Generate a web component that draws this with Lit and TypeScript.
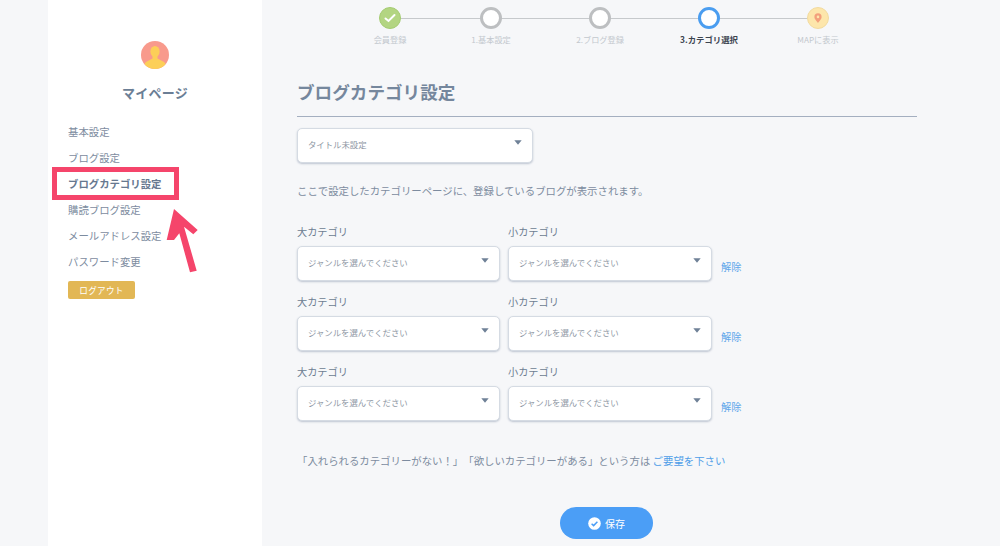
import { LitElement, html, css } from "lit";
import { customElement } from "lit/decorators.js";

const caret = html`<svg class="caret" width="8" height="5" viewBox="0 0 8 5"><path d="M0.3 0.3H7.7L4 4.7Z" fill="currentColor"/></svg>`;

@customElement("app-root")
export class AppRoot extends LitElement {
  static styles = css`
    :host { display: block; width: 1000px; height: 546px; overflow: hidden; background: #f6f7f9; position: relative;
      font-family: "Noto Sans CJK JP", "Noto Sans", sans-serif; color: #75859a; text-spacing-trim: space-all; }
    .page { display: flex; height: 546px; padding-left: 48px; box-sizing: border-box; }
    .side { width: 214px; flex: none; background: #fff; display: flex; flex-direction: column; box-sizing: border-box; padding-top: 41px; }
    .avatar { align-self: center; width: 28px; height: 28px; display: block; }
    .side h2 { margin: 14px 0 0; text-align: center; font-size: 13px; line-height: 20px; font-weight: 700; color: #6b7e95; letter-spacing: 0.3px; }
    .nav { margin-top: 16px; padding-left: 20px; display: flex; flex-direction: column; }
    .nav a { height: 26px; line-height: 26px; font-size: 10.4px; color: #7d8ca0; white-space: nowrap; }
    .nav a.on { font-weight: 700; color: #66788f; }
    .logout { margin: 6px 0 0 20px; width: 67px; height: 18px; border-radius: 2px; background: #e2b755; color: #fff; font-size: 8.6px; line-height: 18px; text-align: center; letter-spacing: 0.3px; }
    .main { flex: 1; padding-left: 35px; min-width: 0; }
    .steps { display: flex; gap: 109px; margin-left: 93px; position: relative; padding-top: 7px; }
    .line { position: absolute; left: 0; top: 18px; width: 428px; height: 1px; background: #c6c9cc; }
    .step { width: 0; display: flex; flex-direction: column; align-items: center; position: relative; }
    .step.first { margin-right: -8px; }
    .dot { width: 22px; height: 22px; flex: none; box-sizing: border-box; border-radius: 50%; background: #fff; border: 3px solid #bdbfc1; display: flex; align-items: center; justify-content: center; }
    .dot.done { background: #b3d582; border: 1px solid #a5cc72; }
    .dot.cur { border-color: #4a9df0; }
    .dot.map { background: #fde6ab; border: 1px solid #f2dba0; }
    .lbl { margin-top: 3px; font-size: 8.2px; line-height: 14px; color: #c3c8ce; white-space: nowrap; }
    .lbl.cur { color: #3c4450; font-weight: 700; font-size: 8.4px; }
    h1 { margin: 33px 0 0; font-size: 17.6px; line-height: 26px; font-weight: 700; color: #75879d; }
    .rule { width: 620px; height: 1px; background: #a4afc0; margin-top: 11px; }
    .sel { box-sizing: border-box; height: 35px; background: #fff; border: 1px solid #d5dbe3; border-radius: 5px; box-shadow: 0 1px 2px rgba(120,135,160,.45);
      display: flex; align-items: center; justify-content: space-between; padding: 0 10px 3px 10px; font-size: 8.4px; color: #8d96a3; }
    .sel.title { width: 236px; margin-top: 11px; }
    .sel .caret { color: #6f8197; margin-top: -3px; }
    .note { margin: 20px 0 0; font-size: 10.4px; line-height: 16px; color: #7d8ca0; white-space: nowrap; }
    .rows { margin-top: 26px; display: flex; flex-direction: column; gap: 14px; }
    .row { display: flex; height: 56px; }
    .col { display: flex; flex-direction: column; gap: 7px; margin-right: 8px; }
    .col label { font-size: 10.2px; line-height: 14px; color: #6d7d91; }
    .col.a .sel { width: 203px; }
    .col.b .sel { width: 204px; }
    .col.b { margin-right: 9px; }
    .clear { margin-top: 35px; font-size: 10.2px; line-height: 14px; color: #5ea6ea; }
    .foot { margin: 32px 0 0; font-size: 10.4px; line-height: 16px; color: #7d8ca0; white-space: nowrap; }
    .foot a { color: #4f9ee8; }
    .save { margin: 38px 0 0 263px; width: 93px; height: 32px; border-radius: 16px; background: #4b9ef6; color: #fff; display: flex; align-items: center; justify-content: center; gap: 4px; font-size: 10px; }
    .box { position: absolute; left: 52px; top: 167px; width: 127px; height: 33px; box-sizing: border-box; border: 5px solid #f5456b; }
    .arrow { position: absolute; left: 160px; top: 205px; }
  `;

  render() {
    const row = html`<div class="row">
      <div class="col a"><label>大カテゴリ</label><div class="sel"><span>ジャンルを選んでください</span>${caret}</div></div>
      <div class="col b"><label>小カテゴリ</label><div class="sel"><span>ジャンルを選んでください</span>${caret}</div></div>
      <span class="clear">解除</span>
    </div>`;
    return html`
      <div class="page">
        <aside class="side">
          <svg class="avatar" viewBox="0 0 28 28">
            <defs><clipPath id="c"><circle cx="14" cy="14" r="14"/></clipPath></defs>
            <circle cx="14" cy="14" r="14" fill="#f89a8c"/>
            <g clip-path="url(#c)" fill="#fccf58">
              <ellipse cx="14" cy="10.5" rx="4.6" ry="5.6"/>
              <path d="M11.5 14h5v3.5l6.5 3.5c1.5 1 2 3 2 7H3c0-4 .5-6 2-7l6.5-3.5z"/>
            </g>
          </svg>
          <h2>マイページ</h2>
          <nav class="nav">
            <a>基本設定</a><a>ブログ設定</a><a class="on">ブログカテゴリ設定</a><a>購読ブログ設定</a><a>メールアドレス設定</a><a>パスワード変更</a>
          </nav>
          <div class="logout">ログアウト</div>
        </aside>
        <main class="main">
          <div class="steps">
            <div class="line"></div>
            <div class="step first"><div class="dot done"><svg width="12" height="10" viewBox="0 0 12 10"><path d="M1.5 5.5L4.5 8L10.5 2" fill="none" stroke="#fff" stroke-width="2" stroke-linecap="round"/></svg></div><div class="lbl">会員登録</div></div>
            <div class="step"><div class="dot"></div><div class="lbl">1.基本設定</div></div>
            <div class="step"><div class="dot"></div><div class="lbl">2.ブログ登録</div></div>
            <div class="step"><div class="dot cur"></div><div class="lbl cur">3.カテゴリ選択</div></div>
            <div class="step"><div class="dot map"><svg width="8" height="10" viewBox="0 0 8 10"><path fill-rule="evenodd" d="M4 .3a3.6 3.6 0 0 1 3.6 3.6C7.6 6.2 4 9.7 4 9.7S.4 6.2.4 3.9A3.6 3.6 0 0 1 4 .3zM4 2.6a1.3 1.3 0 1 0 0 2.6 1.3 1.3 0 0 0 0-2.6z" fill="#f3a07c"/></svg></div><div class="lbl">MAPに表示</div></div>
          </div>
          <h1>ブログカテゴリ設定</h1>
          <div class="rule"></div>
          <div class="sel title"><span>タイトル未設定</span>${caret}</div>
          <p class="note">ここで設定したカテゴリーページに、登録しているブログが表示されます。</p>
          <div class="rows">${row}${row}${row}</div>
          <p class="foot">「入れられるカテゴリーがない！」「欲しいカテゴリーがある」という方は <a>ご要望を下さい</a></p>
          <div class="save"><svg width="13" height="13" viewBox="0 0 13 13"><circle cx="6.5" cy="6.5" r="6.3" fill="#fff"/><path d="M3.6 6.8L5.6 8.6L9.4 4.8" fill="none" stroke="#4b9ef6" stroke-width="1.5"/></svg><span>保存</span></div>
        </main>
      </div>
      <div class="box"></div>
      <svg class="arrow" width="42" height="70" viewBox="0 0 42 70">
        <path d="M14 4L37.7 25L33.3 29.3L24 21.7L36.7 65.7L30 67.3L19.3 28.3L14 35L6.7 35Z" fill="#f5456b"/>
      </svg>
    `;
  }
}
